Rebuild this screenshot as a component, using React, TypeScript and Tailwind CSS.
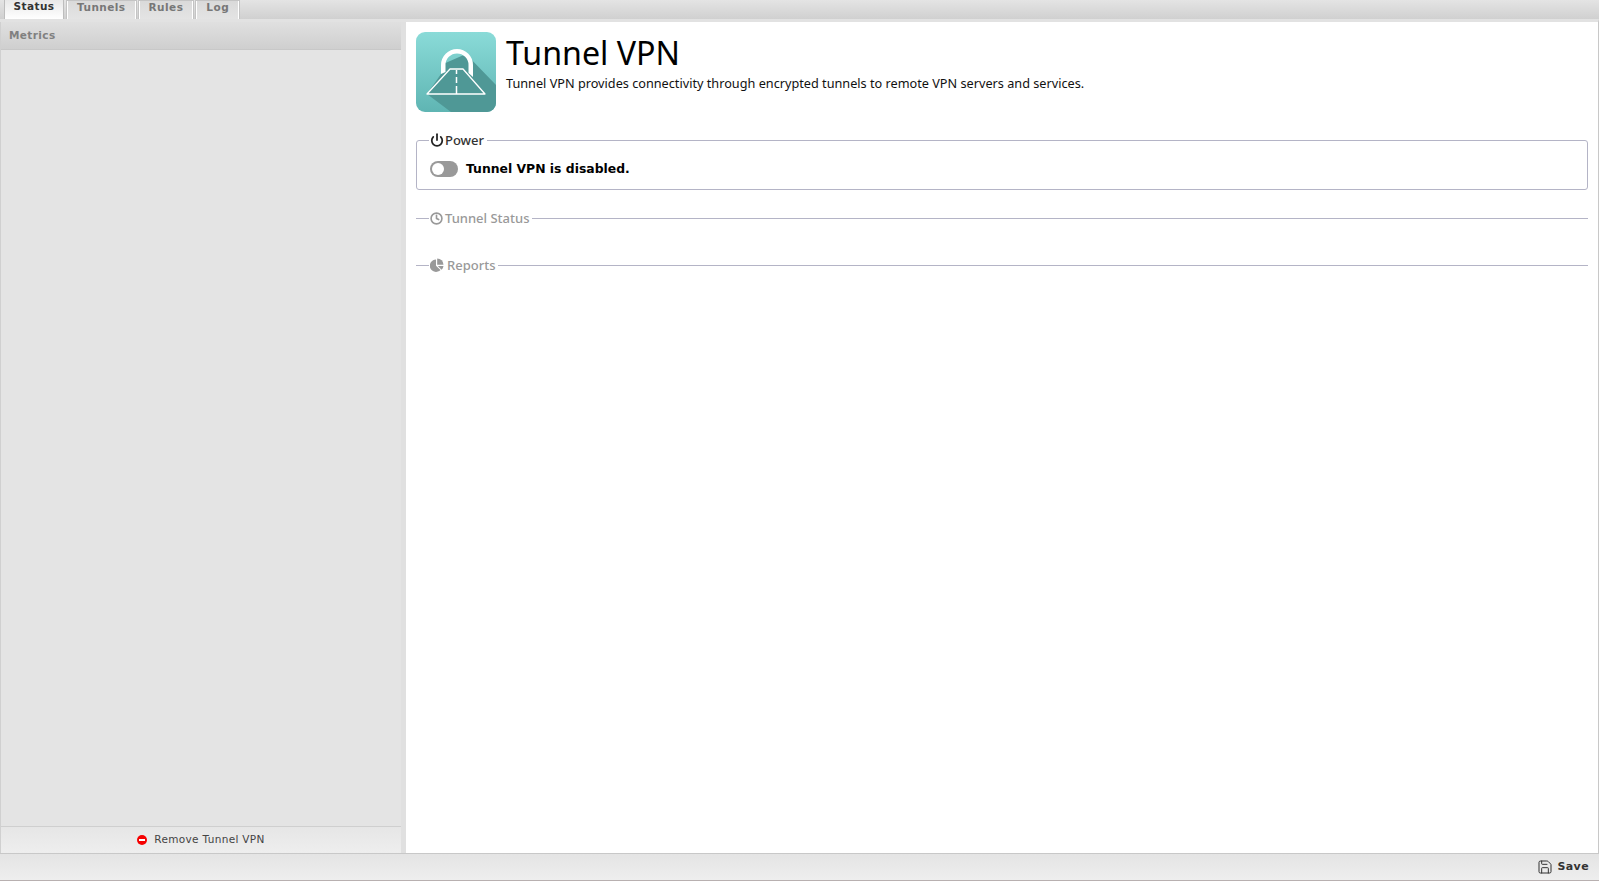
import { Power, Clock, Save } from 'lucide-react'

const tabs = ['Status', 'Tunnels', 'Rules', 'Log']

function TunnelLogo() {
  return (
    <svg width="80" height="80" viewBox="0 0 80 80" className="block shrink-0">
      <defs>
        <linearGradient id="logoBg" x1="0" y1="0" x2="0" y2="1">
          <stop offset="0" stopColor="#8adbd8" />
          <stop offset="1" stopColor="#5fb5b3" />
        </linearGradient>
      </defs>
      <rect width="80" height="80" rx="9" fill="url(#logoBg)" />
      <path d="M50 22 L80 53 V71 a9 9 0 0 1 -9 9 H35 L11 62 L25 42 V33 Z" fill="#4f9896" />
      <path d="M25 42 V33 a16 16 0 0 1 32 0 V45 L52.500 41 V33 a11.500 11.500 0 0 0 -23 0 V40 Z" fill="#ffffff" />
      <path d="M11 62 L34 37 H47 L69 62 Z" fill="#4f9896" stroke="#ffffff" strokeWidth="1.300" strokeLinejoin="round" />
      <path d="M40.500 38 V42 M40.500 45 V51 M40.500 54 V62" stroke="#ffffff" strokeWidth="1.500" />
    </svg>
  )
}

function PieIcon() {
  return (
    <svg width="14" height="14" viewBox="0 0 14 14" className="block">
      <path d="M6 1.500 V7.800 L10.500 12 A6.200 6.200 0 1 1 6 1.500 Z" fill="#999999" />
      <path d="M7.200 0.500 A6.300 6.300 0 0 1 13.500 6.800 H7.200 Z" fill="#999999" />
      <path d="M7.800 8 H13.500 A6 6 0 0 1 11.600 11.800 Z" fill="#999999" />
    </svg>
  )
}

export default function App() {
  return (
    <div className="flex h-[881px] w-[1599px] flex-col overflow-hidden bg-white font-['DejaVu_Sans',sans-serif] text-black">
      <div className="flex h-[19px] items-end gap-[3px] bg-gradient-to-b from-[#e4e4e4] to-[#d0d0d0] pl-[4px]">
        {tabs.map((t, i) => (
          <div
            key={t}
            className={
              i === 0
                ? 'flex h-[19px] w-[60px] items-center justify-center border-x border-[#bdbdbd] bg-gradient-to-b from-[#e8e8e8] to-white pb-[5px] text-[10.500px] font-bold tracking-[0.45px] text-[#333333]'
                : 'flex h-[18px] items-center justify-center border-x border-white bg-gradient-to-b from-[#dadada] to-[#e4e4e4] px-[9px] pb-[5px] text-[10.500px] font-bold tracking-[0.45px] text-[#777777] outline outline-1 outline-[#c4c4c4]'
            }
          >
            {t}
          </div>
        ))}
      </div>

      <div className="flex min-h-0 flex-1 border-t-[3px] border-[#e2e2e2] border-r border-r-[#c8c8c8]">
        <aside className="flex w-[401px] shrink-0 flex-col border-l border-[#d0d0d0] bg-[#e4e4e4]">
          <div className="flex h-[28px] shrink-0 items-center border-b border-[#c8c8c8] bg-gradient-to-b from-[#e0e0e0] to-[#cfcfcf] pl-[8px] text-[10.500px] font-bold tracking-[0.4px] text-[#808080]">
            Metrics
          </div>
          <div className="flex-1" />
          <div className="flex h-[27px] shrink-0 items-center justify-center gap-[7px] border-t border-[#cfcfcf] bg-gradient-to-b from-[#e6e6e6] to-[#eeeeee] text-[10.500px] tracking-[0.33px] text-[#444444]">
            <span className="flex h-[10px] w-[10px] items-center justify-center rounded-full bg-[#f50000]">
              <span className="h-[2px] w-[6px] bg-white" />
            </span>
            Remove Tunnel VPN
          </div>
        </aside>

        <div className="w-[5px] shrink-0 bg-[#e0e0e0]" />

        <main className="min-w-0 flex-1 px-[10px] pt-[10px] font-['Noto_Sans',sans-serif]">
          <div className="flex gap-[10px]">
            <TunnelLogo />
            <div>
              <h1 className="h-[42px] text-[32.200px] leading-[42px] font-normal text-black">Tunnel VPN</h1>
              <p className="text-[12.700px] leading-[18px] text-[#111111]">
                Tunnel VPN provides connectivity through encrypted tunnels to remote VPN servers and services.
              </p>
            </div>
          </div>

          <fieldset className="mt-[19px] h-[59px] rounded-[3px] border border-[#b4b4c6] px-[12px]">
            <legend className="flex items-center gap-[1px] pl-[1px] pr-[3px] text-[13px] leading-[18px] font-medium text-[#333333]">
              <Power size={14} strokeWidth={3} className="text-[#222222]" />
              Power
            </legend>
            <div className="mt-[11px] flex items-center gap-[8px] pl-[1px]">
              <span className="flex h-[16px] w-[28px] items-center rounded-full bg-[#999999] pl-[2px]">
                <span className="h-[12px] w-[12px] rounded-full bg-white" />
              </span>
              <span className="font-['DejaVu_Sans',sans-serif] text-[12.400px] font-bold text-black">
                Tunnel VPN is disabled.
              </span>
            </div>
          </fieldset>

          <fieldset className="mt-[19px] h-[47px] border-t border-[#b4b4c6] px-[13px]">
            <legend className="flex items-center gap-[2px] pl-[1px] pr-[3px] text-[13px] leading-[18px] font-medium text-[#999999]">
              <Clock size={13} strokeWidth={3} className="text-[#999999]" />
              Tunnel Status
            </legend>
          </fieldset>

          <fieldset className="h-[38px] border-t border-[#b4b4c6] px-[13px]">
            <legend className="flex items-center gap-[3px] pl-[1px] pr-[3px] text-[13px] leading-[18px] font-medium text-[#999999]">
              <PieIcon />
              Reports
            </legend>
          </fieldset>
        </main>
      </div>

      <div className="flex h-[28px] shrink-0 items-center justify-end gap-[4px] border-y border-y-[#c8c8c8] border-b-[#b8b0b0] bg-gradient-to-b from-[#e4e4e4] to-[#eeeeee] pr-[10px] text-[11px] font-bold tracking-[0.4px] text-[#333333]">
        <Save size={16} strokeWidth={1.500} />
        Save
      </div>
    </div>
  )
}
